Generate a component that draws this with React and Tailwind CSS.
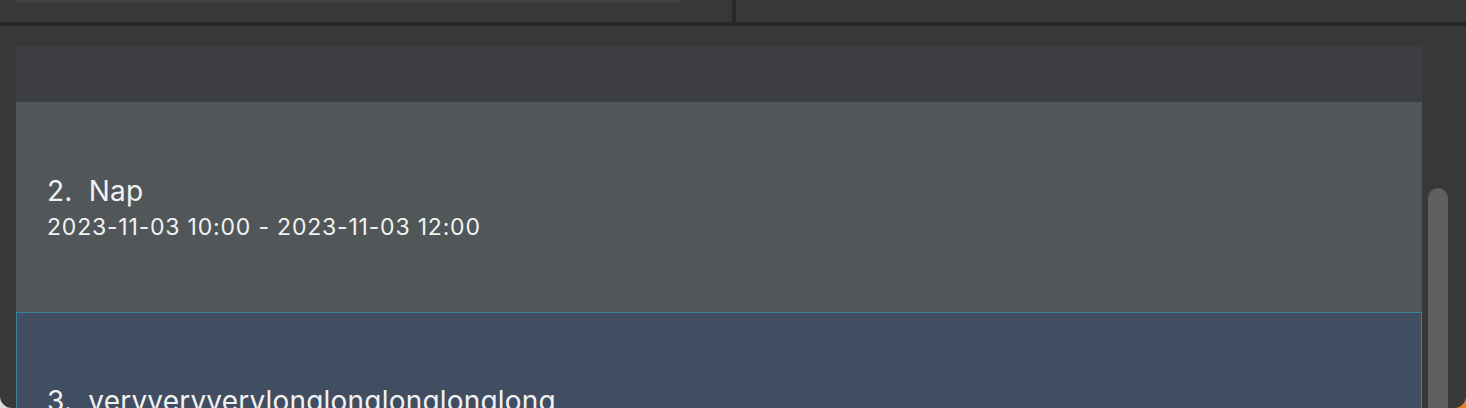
import React from 'react';

const events = [
  { id: 2, name: 'Nap', start: '2023-11-03 10:00', end: '2023-11-03 12:00' },
  { id: 3, name: 'veryveryverylonglonglonglonglong', start: '2023-11-04 10:00', end: '2023-11-04 12:00', selected: true },
];

function EventCard({ event }) {
  return (
    <div
      className={
        event.selected
          ? 'h-[210px] shrink-0 bg-[#414d60] border border-[#3b8298] pl-[30px] pt-[72px]'
          : 'h-[210px] shrink-0 bg-[#515658] pl-[31px] pt-[73px]'
      }
    >
      <div className="text-[28px] leading-[32px] text-[#f2f2f2] whitespace-pre tracking-[0.2px]">
        {event.id}.  {event.name}
      </div>
      <div className="text-[23px] leading-[28px] text-[#f2f2f2] mt-[6px] tracking-[0.8px]">
        {event.start} - {event.end}
      </div>
    </div>
  );
}

export default function App() {
  return (
    <div className="w-[1466px] h-[408px] bg-gradient-to-r from-[#dcdcdc] via-[#8a8a8a] to-[#e0801f]" style={{ fontFamily: 'Inter, "Noto Sans", sans-serif' }}>
      <div className="w-full h-full bg-[#383838] rounded-b-[12px] overflow-hidden flex flex-col">
        {/* top bar */}
        <div className="h-[22px] flex shrink-0">
          <div className="w-[732px] pl-4">
            <div className="w-[666px] h-[2px] bg-[#414141]" />
          </div>
          <div className="w-[4px] bg-[#282828]" />
          <div className="flex-1" />
        </div>
        <div className="h-[4px] bg-[#282828] shrink-0" />

        {/* list panel */}
        <div className="flex-1 flex pt-[20px] min-h-0">
          <div className="w-[1406px] ml-4 flex flex-col overflow-hidden">
            <div className="h-[56px] bg-[#3d3e41] shrink-0" />
            {events.map((e) => (
              <EventCard key={e.id} event={e} />
            ))}
          </div>
          <div className="w-[44px] pl-[6px] pt-[142px]">
            <div className="w-[20px] h-[400px] rounded-[10px] bg-[#5f5f5f]" />
          </div>
        </div>
      </div>
    </div>
  );
}
